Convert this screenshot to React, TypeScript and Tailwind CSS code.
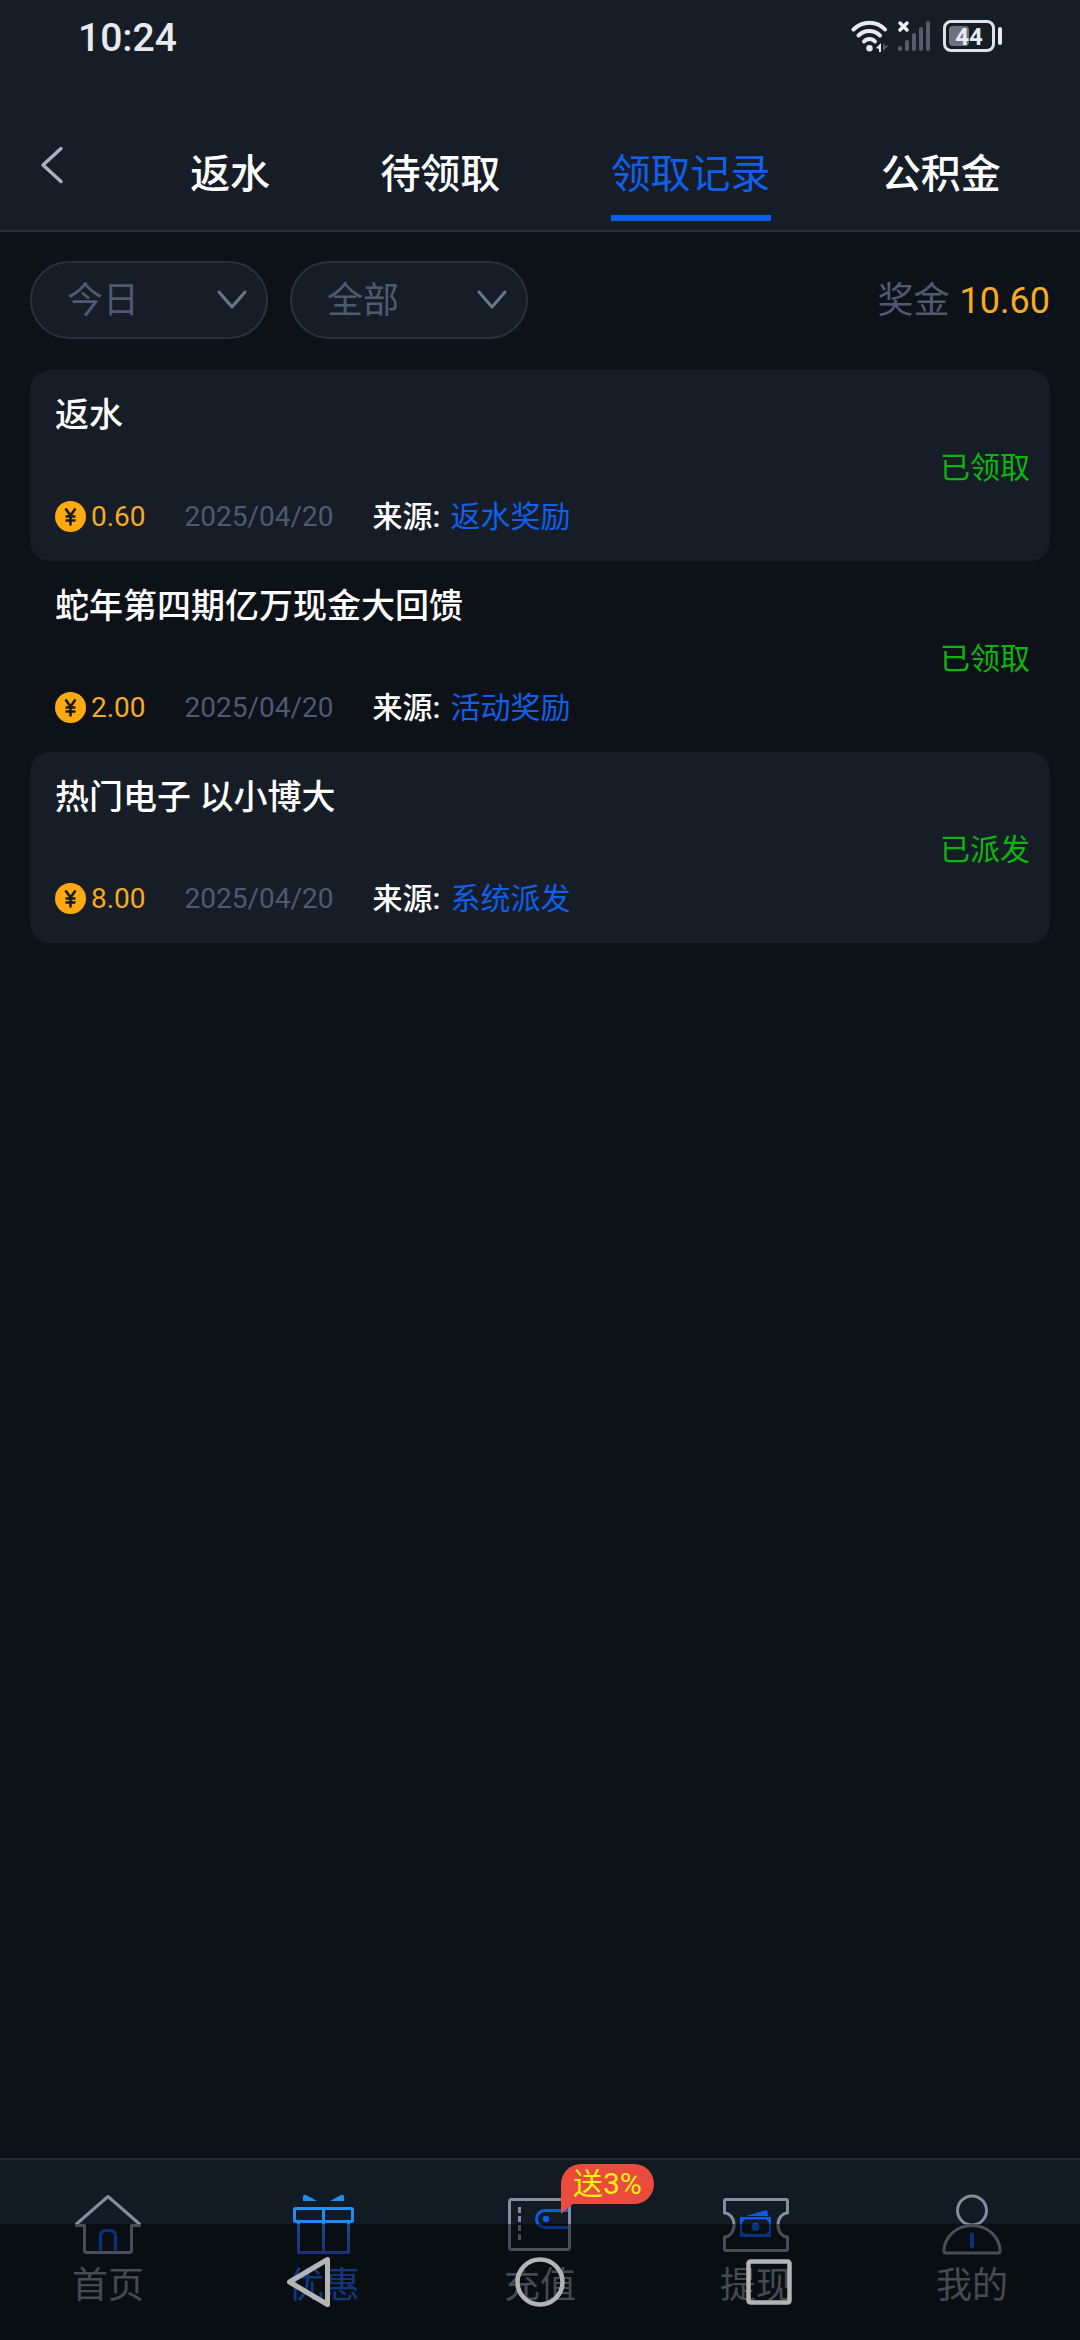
import { useState } from "react";
import type { ReactNode } from "react";

type RewardRecord = {
  id: number;
  title: string;
  amount: string;
  date: string;
  source: string;
  status: string;
};

const TABS = ["返水", "待领取", "领取记录", "公积金"];

const RECORDS: RewardRecord[] = [
  { id: 1, title: "返水", amount: "0.60", date: "2025/04/20", source: "返水奖励", status: "已领取" },
  { id: 2, title: "蛇年第四期亿万现金大回馈", amount: "2.00", date: "2025/04/20", source: "活动奖励", status: "已领取" },
  { id: 3, title: "热门电子 以小博大", amount: "8.00", date: "2025/04/20", source: "系统派发", status: "已派发" },
];

function StatusBar() {
  return (
    <div className="flex h-[76px] items-center justify-between pl-[78px] pr-[78px] text-[#e8eaf0]">
      <span className="text-[39px] leading-none font-medium">10:24</span>
      <div className="flex items-center gap-2 pb-1">
        <svg width="38" height="32" viewBox="0 0 38 32" fill="none" stroke="#e8eaf0" strokeWidth="4" strokeLinecap="round">
          <path d="M2.500 9.500C11.500 0.500 25.500 0.500 34 9.500" />
          <path d="M7.500 15.500C13.500 9.500 23 9.500 29 15.500" />
          <path d="M13 21.500C16 18 21 18 24 21.500" />
          <circle cx="18.500" cy="28.300" r="3.200" fill="#e8eaf0" stroke="none" />
          <path d="M30 23v9h-2v-3l-3-1z" fill="#e8eaf0" stroke="none" />
          <path d="M32 23v8l6-6-4 1z" fill="#565c68" stroke="none" />
        </svg>
        <svg width="34" height="32" viewBox="0 0 34 32" fill="none" strokeLinecap="round" strokeWidth="4">
          <path d="M3 28v1M10 22v7M17 15v14M24 9v20M31 3v26" stroke="#565c68" />
          <path d="M3 3l7 7M10 3l-7 7" stroke="#f0f2f6" strokeWidth="3.500" />
        </svg>
        <div className="ml-1 flex items-center gap-[3px]">
          <div className="relative h-8 w-[52px] rounded-lg border-[3px] border-[#dfe2e8]">
            <div className="absolute inset-y-[3px] left-[3px] w-5 rounded bg-[#6d737e]" />
            <span className="absolute inset-0 text-center text-2xl leading-[28px] font-bold">44</span>
          </div>
          <div className="h-[18px] w-1 rounded-full bg-[#e8eaf0]" />
        </div>
      </div>
    </div>
  );
}

function FilterSelect({ label, options }: { label: string; options: string[] }) {
  return (
    <div className="relative">
      <select
        aria-label={label}
        className="h-[78px] w-[238px] appearance-none rounded-full border-2 border-[#28323f] bg-[#161d27] pt-0.5 pl-[35px] text-4xl text-[#4d5a72] outline-none"
      >
        {options.map((o) => (
          <option key={o}>{o}</option>
        ))}
      </select>
      <svg
        className="pointer-events-none absolute top-7 right-5"
        width="32"
        height="22"
        viewBox="0 0 32 22"
        fill="none"
        stroke="#69778c"
        strokeWidth="3"
        strokeLinecap="round"
        strokeLinejoin="round"
      >
        <path d="M3 3l13 15L29 3" />
      </svg>
    </div>
  );
}

function CoinIcon() {
  return (
    <svg width="32" height="32" viewBox="0 0 32 32">
      <circle cx="15.500" cy="15.500" r="15.500" fill="#ffaa10" />
      <path d="M10.500 7.500l5 7 5-7M15.500 14.500v10M10.500 15.500h10M10.500 19.500h10" fill="none" stroke="#161d27" strokeWidth="2.600" />
    </svg>
  );
}

function RecordCard({ record }: { record: RewardRecord }) {
  return (
    <li className="flex items-center justify-between rounded-[20px] pt-[25px] pr-5 pb-6 pl-[25px] odd:bg-[#161d27]">
      <div>
        <h2 className="text-[34px] leading-10 font-medium text-white">{record.title}</h2>
        <div className="mt-[62px] flex items-center text-[30px] leading-10">
          <CoinIcon />
          <span className="ml-1 text-[28px] text-[#f5ab23]">{record.amount}</span>
          <span className="ml-[39px] text-[28px] text-[#4d5a72]">{record.date}</span>
          <span className="ml-[39px] font-medium text-white">来源:</span>
          <span className="ml-2.5 text-[#1060ec]">{record.source}</span>
        </div>
      </div>
      <span className="pt-1 text-[30px] leading-10 text-[#0db60d]">{record.status}</span>
    </li>
  );
}

function IconFrame({ children }: { children: ReactNode }) {
  return (
    <svg
      width="68"
      height="62"
      viewBox="0 0 68 62"
      fill="none"
      stroke="#858d9e"
      strokeWidth="3"
      strokeLinecap="round"
      strokeLinejoin="round"
    >
      {children}
    </svg>
  );
}

const HomeIcon = () => (
  <IconFrame>
    <path d="M34 2.500L2.500 30v1.500H10.500V56.500q0 2 2 2H55.500q2 0 2-2V31.500H65.500V30z" />
    <path d="M26.500 56V42.500q0-6 6-6h3q6 0 6 6V56" stroke="#0f5be8" />
  </IconFrame>
);

const GiftIcon = () => (
  <IconFrame>
    <defs>
      <linearGradient id="gift" x1="0" y1="0" x2="0" y2="60" gradientUnits="userSpaceOnUse">
        <stop offset="0" stopColor="#1e9bfa" />
        <stop offset="0.5" stopColor="#2088f5" />
        <stop offset="1" stopColor="#2f5ae0" />
      </linearGradient>
    </defs>
    <g stroke="url(#gift)">
      <rect x="4.500" y="14.500" width="58" height="13" rx="1" />
      <path d="M8.500 27.500v31h50v-31M33.500 14.500v44" />
    </g>
    <path d="M13 7V3q0-3 3-2l11 6zM54 7V3q0-3-3-2L40 7z" fill="#1e90f0" stroke="none" />
  </IconFrame>
);

const WalletIcon = () => (
  <IconFrame>
    <path d="M63 16.500H39a8.500 8.500 0 0 0 0 17H63" stroke="#0f5be8" strokeLinecap="butt" />
    <circle cx="40" cy="25" r="3.200" fill="#0f5be8" stroke="none" />
    <rect x="3.500" y="5.500" width="60" height="50" rx="2" />
    <path d="M13.500 13v6M13.500 22v6M13.500 31v6M13.500 40v6" strokeLinecap="butt" />
  </IconFrame>
);

const TicketIcon = () => (
  <IconFrame>
    <path d="M4 5.500h60q1.500 0 1.500 1.500v12c-5 0-9.500 5-9.500 12s4.500 12 9.500 12v12q0 1.500-1.500 1.500H4q-1.500 0-1.500-1.500V43c5 0 9.500-5 9.500-12S7.500 19 2.500 19V7q0-1.500 1.500-1.500z" />
    <path
      fillRule="evenodd"
      d="M18 23h31v20H18zM23 25.500l-3 3v8.500l3 3h21l3-3v-8.500l-3-3z"
      fill="#0f5be8"
      stroke="none"
    />
    <path d="M24 22l21-6 1.500 6z" fill="#0f5be8" stroke="none" />
    <circle cx="33.500" cy="33" r="4" fill="#0f5be8" stroke="none" />
  </IconFrame>
);

const UserIcon = () => (
  <IconFrame>
    <circle cx="34" cy="16.500" r="14.500" />
    <path d="M7.500 59q-1.500 0-1.500-1.500C6 43 18 31.500 34 31.500S62 43 62 57.500q0 1.500-1.500 1.500z" />
    <path d="M34 40.500v12" stroke="#0f5be8" strokeWidth="4" />
  </IconFrame>
);

const NAV = [
  { label: "首页", icon: HomeIcon },
  { label: "优惠", icon: GiftIcon, active: true },
  { label: "充值", icon: WalletIcon, badge: "送3%" },
  { label: "提现", icon: TicketIcon },
  { label: "我的", icon: UserIcon },
];

function BottomNav() {
  return (
    <nav className="grid grid-cols-5 border-t-2 border-[#222b38] bg-[#121a23]">
      {NAV.map(({ label, icon: Icon, active, badge }) => (
        <a key={label} href="#" className="relative flex flex-col items-center gap-2 pt-[34px] pb-8">
          <Icon />
          <span className={`text-4xl leading-[44px] ${active ? "text-[#1f66e8]" : "text-[#7e8797]"}`}>{label}</span>
          {badge && (
            <span className="absolute top-1 left-[129px] rounded-[20px] rounded-bl-none bg-[#e94b3c] px-3 text-[30px] leading-10 whitespace-nowrap text-[#fff01a]">
              {badge}
              <svg className="absolute top-full left-0" width="12" height="10" viewBox="0 0 12 10">
                <path d="M0 0h12L0 10z" fill="#e94b3c" />
              </svg>
            </span>
          )}
        </a>
      ))}
    </nav>
  );
}

// Android three-button bar, translucent over the app's own nav
function SystemNav() {
  return (
    <div className="fixed inset-x-0 bottom-0 flex h-[116px] items-center justify-center gap-[180px] bg-black/45">
      <button aria-label="Back">
        <svg width="50" height="50" viewBox="0 0 50 50" fill="none" stroke="#b4b4b4" strokeWidth="5" strokeLinejoin="round">
          <path d="M42.500 2.500v45L4.500 25z" />
        </svg>
      </button>
      <button aria-label="Home">
        <svg width="50" height="50" viewBox="0 0 50 50" fill="none" stroke="#b4b4b4" strokeWidth="4.500">
          <circle cx="25" cy="25" r="22.500" />
        </svg>
      </button>
      <button aria-label="Recents">
        <svg width="50" height="50" viewBox="0 0 50 50" fill="none" stroke="#b4b4b4" strokeWidth="4.500">
          <rect x="3.500" y="4.500" width="41" height="41" rx="2" />
        </svg>
      </button>
    </div>
  );
}

export default function App() {
  const [tab, setTab] = useState("领取记录");

  return (
    <div className="flex min-h-screen flex-col bg-[#0d1118] font-[Roboto,'Noto_Sans_CJK_SC',sans-serif]">
      <header className="border-b-2 border-[#28323f] bg-[#161d27]">
        <StatusBar />
        <div className="flex h-[154px] items-end pr-6 pb-[9px]">
          <button aria-label="返回" className="flex h-28 w-[135px] items-center pl-10">
            <svg width="24" height="38" viewBox="0 0 24 38" fill="none" stroke="#a9b0c0" strokeWidth="3.500" strokeLinecap="round" strokeLinejoin="round">
              <path d="M21 2.500L3 19l18 16.500" />
            </svg>
          </button>
          <div className="flex flex-1 justify-around">
            {TABS.map((t) => (
              <button
                key={t}
                onClick={() => setTab(t)}
                className={`border-b-[6px] pt-0.5 pb-2.5 text-[40px] leading-[60px] ${
                  t === tab ? "border-[#0a5ff0] text-[#1060ec]" : "border-transparent font-medium text-white"
                }`}
              >
                {t}
              </button>
            ))}
          </div>
        </div>
      </header>

      <main className="flex-1 px-[30px] pt-[29px]">
        <div className="flex items-center justify-between">
          <div className="flex gap-[22px]">
            <FilterSelect label="日期" options={["今日", "昨日", "近7日"]} />
            <FilterSelect label="类型" options={["全部", "返水", "活动"]} />
          </div>
          <p className="flex gap-2.5 pt-0.5 text-4xl text-[#4d5a72]">
            奖金 <span className="text-[#f5ab23]">10.60</span>
          </p>
        </div>
        <ul className="mt-[31px]">
          {RECORDS.map((r) => (
            <RecordCard key={r.id} record={r} />
          ))}
        </ul>
      </main>

      <BottomNav />
      <SystemNav />
    </div>
  );
}
